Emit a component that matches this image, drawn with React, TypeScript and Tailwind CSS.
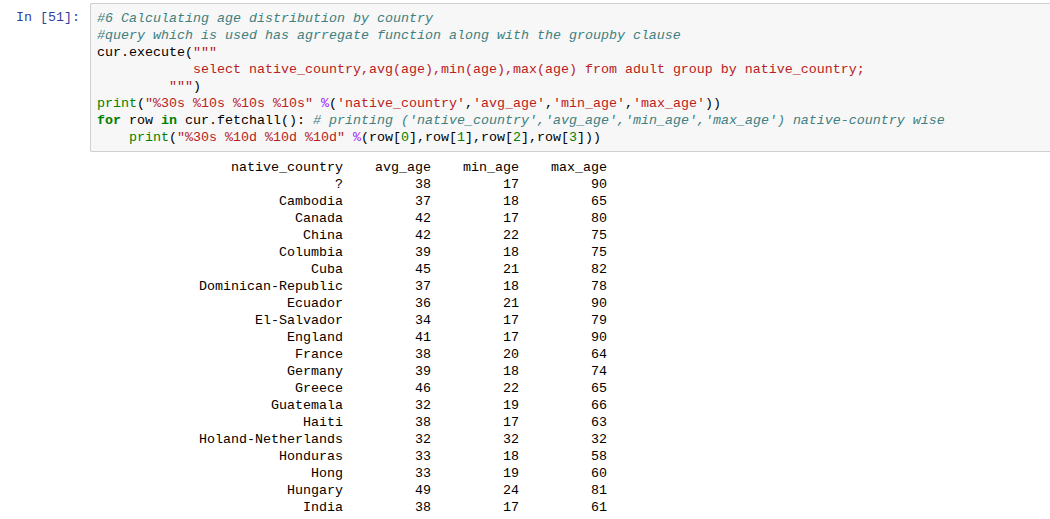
const mono = "font-['Liberation_Mono','Courier_New',monospace] text-[13.33px] leading-[17px]";

const rows: [string, number, number, number][] = [
  ['?', 38, 17, 90],
  ['Cambodia', 37, 18, 65],
  ['Canada', 42, 17, 80],
  ['China', 42, 22, 75],
  ['Columbia', 39, 18, 75],
  ['Cuba', 45, 21, 82],
  ['Dominican-Republic', 37, 18, 78],
  ['Ecuador', 36, 21, 90],
  ['El-Salvador', 34, 17, 79],
  ['England', 41, 17, 90],
  ['France', 38, 20, 64],
  ['Germany', 39, 18, 74],
  ['Greece', 46, 22, 65],
  ['Guatemala', 32, 19, 66],
  ['Haiti', 38, 17, 63],
  ['Holand-Netherlands', 32, 32, 32],
  ['Honduras', 33, 18, 58],
  ['Hong', 33, 19, 60],
  ['Hungary', 49, 24, 81],
  ['India', 38, 17, 61],
];

function C({ children }: { children: React.ReactNode }) {
  return <span className="italic text-[#408080]">{children}</span>;
}
function S({ children }: { children: React.ReactNode }) {
  return <span className="text-[#BA2121]">{children}</span>;
}
function K({ children }: { children: React.ReactNode }) {
  return <span className="font-bold text-[#008000]">{children}</span>;
}
function B({ children }: { children: React.ReactNode }) {
  return <span className="text-[#008000]">{children}</span>;
}
function O({ children }: { children: React.ReactNode }) {
  return <span className="text-[#AA22FF]">{children}</span>;
}

export default function App() {
  const header =
    'native_country'.padStart(30) + ' ' + 'avg_age'.padStart(10) + ' ' + 'min_age'.padStart(10) + ' ' + 'max_age'.padStart(10);
  const lines = rows.map(
    ([c, a, mn, mx]) =>
      c.padStart(30) + ' ' + String(a).padStart(10) + ' ' + String(mn).padStart(10) + ' ' + String(mx).padStart(10)
  );

  return (
    <div className="min-h-screen overflow-hidden bg-white pt-[3px] text-black">
      <div className="flex">
        <div className={`${mono} w-[90px] shrink-0 pr-[10px] pt-[6px] text-right text-[#303F9F]`}>In [51]:</div>
        <div className="flex-1 rounded-l-[2px] border border-r-0 border-[#cfcfcf] bg-[#f7f7f7] pb-[5px] pl-[6px] pt-[6px]">
          <pre className={`${mono} whitespace-pre text-black`}>
            <C>#6 Calculating age distribution by country</C>
            {'\n'}
            <C>#query which is used has agrregate function along with the groupby clause</C>
            {'\n'}cur.execute(<S>"""</S>
            {'\n            '}
            <S>select native_country,avg(age),min(age),max(age) from adult group by native_country;</S>
            {'\n         '}
            <S>"""</S>)
            {'\n'}
            <B>print</B>(<S>"%30s %10s %10s %10s"</S> <O>%</O>(<S>'native_country'</S>,<S>'avg_age'</S>,<S>'min_age'</S>,<S>'max_age'</S>))
            {'\n'}
            <K>for</K> row <K>in</K> cur.fetchall(): <C># printing ('native_country','avg_age','min_age','max_age') native-country wise</C>
            {'\n    '}
            <B>print</B>(<S>"%30s %10d %10d %10d"</S> <O>%</O>(row[<B>0</B>],row[<B>1</B>],row[<B>2</B>],row[<B>3</B>]))
          </pre>
        </div>
      </div>
      <pre className={`${mono} ml-[103px] mt-[7px] whitespace-pre text-black`}>
        {[header, ...lines].join('\n')}
      </pre>
    </div>
  );
}
